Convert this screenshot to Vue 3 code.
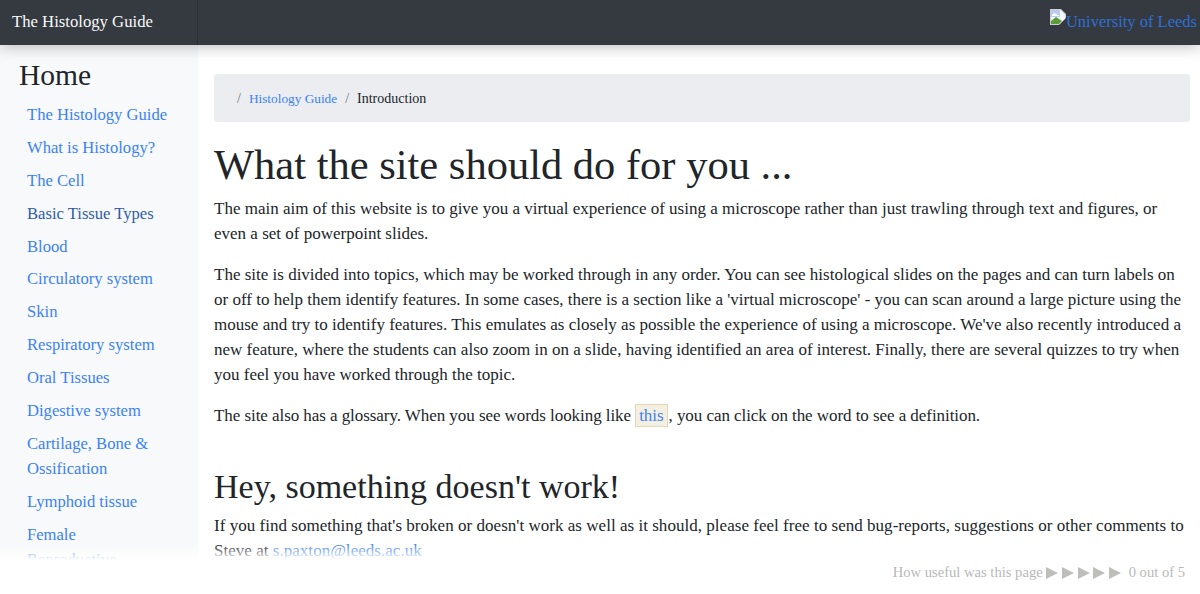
<script setup>
const navItems = [
  'The Histology Guide', 'What is Histology?', 'The Cell', 'Basic Tissue Types', 'Blood',
  'Circulatory system', 'Skin', 'Respiratory system', 'Oral Tissues', 'Digestive system',
  'Cartilage, Bone & Ossification', 'Lymphoid tissue', 'Female Reproductive'
]
const stars = [1, 2, 3, 4, 5]
</script>

<template>
  <div class="page">
    <header class="topbar">
      <a class="brand" href="#">The Histology Guide</a>
      <a class="leeds" href="#">
        <svg class="broken" width="16" height="16" viewBox="0 0 16 16">
          <path d="M0 0h11l5 5v11H0z" fill="#c9ccd0" />
          <path d="M1 1h9.5L15 5.500V15H1z" fill="#f4f6f8" />
          <path d="M1 1h9v7H1z" fill="#b9cdee" />
          <path d="M2 6c1-2 3-2 4-1s2 1 3 1v1H2z" fill="#fff" />
          <path d="M1 15V12l5-4 3 2 3 2-3 3z" fill="#5d9a3c" />
          <path d="M9 16 16 9v7z" fill="#343a40" />
        </svg>University of Leeds
      </a>
    </header>

    <div class="body">
      <aside class="sidebar">
        <h4 class="side-title">Home</h4>
        <ul class="side-nav">
          <li v-for="item in navItems" :key="item">
            <a href="#" :class="{ dark: item === 'Basic Tissue Types' }">{{ item }}</a>
          </li>
        </ul>
      </aside>

      <main class="content">
        <nav class="crumbs">
          <span class="sep">/</span>
          <a href="#">Histology Guide</a>
          <span class="sep">/</span>
          <span>Introduction</span>
        </nav>

        <h1>What the site should do for you ...</h1>
        <p>The main aim of this website is to give you a virtual experience of using a microscope rather than just trawling through text and figures, or even a set of powerpoint slides.</p>
        <p>The site is divided into topics, which may be worked through in any order. You can see histological slides on the pages and can turn labels on or off to help them identify features. In some cases, there is a section like a 'virtual microscope' - you can scan around a large picture using the mouse and try to identify features. This emulates as closely as possible the experience of using a microscope. We've also recently introduced a new feature, where the students can also zoom in on a slide, having identified an area of interest. Finally, there are several quizzes to try when you feel you have worked through the topic.</p>
        <p class="glossary">The site also has a glossary. When you see words looking like <a class="gloss" href="#">this</a>, you can click on the word to see a definition.</p>

        <h2>Hey, something doesn't work!</h2>
        <p class="report">If you find something that's broken or doesn't work as well as it should, please feel free to send bug-reports, suggestions or other comments to Steve at <a href="#">s.paxton@leeds.ac.uk</a></p>
      </main>
    </div>

    <div class="fade"></div>
    <div class="rating">
      <span>How useful was this page</span>
      <span class="stars"><i v-for="s in stars" :key="s"></i></span>
      <span class="score">0 out of 5</span>
    </div>
  </div>
</template>

<style scoped>
.page {
  position: relative;
  height: 594px;
  overflow: hidden;
  background: #fff;
  color: #212529;
  font-family: "Liberation Serif", "Times New Roman", serif;
  font-size: 17px;
  line-height: 25px;
}
a { color: #3b82f6; text-decoration: none; }

.topbar {
  position: relative;
  z-index: 2;
  height: 45px;
  display: flex;
  justify-content: space-between;
  background: #343a40;
  box-shadow: 0 2px 14px rgba(0, 0, 0, 0.25);
}
.brand {
  width: 198px;
  box-sizing: border-box;
  padding-left: 12px;
  border-right: 1px solid #2b3035;
  color: #f8f9fa;
  font-size: 16.7px;
  line-height: 43px;
}
.leeds {
  color: #2f6fd6;
  padding: 8px 3px 0 0;
  display: flex;
  font-size: 16.5px;
  line-height: 27px;
  height: 27px;
}
.broken { margin-top: 1px; }

.body { display: flex; height: 549px; }
.sidebar {
  width: 198px;
  flex-shrink: 0;
  box-sizing: border-box;
  padding: 12px 0 0 19px;
  background: #f8f9fa;
}
.side-title {
  margin: 0 0 9px;
  font-size: 29.5px;
  font-weight: 400;
  line-height: 36px;
}
.side-nav {
  list-style: none;
  margin: 0;
  padding: 0 0 0 8px;
  width: 142px;
  font-size: 16.6px;
}
.side-nav li { margin-bottom: 7.9px; }
.side-nav .dark { color: #2f5da8; }

.content { flex: 1; padding: 29px 10px 0 16px; min-width: 0; }
.crumbs {
  display: flex;
  align-items: center;
  gap: 8px;
  height: 48px;
  padding-left: 23px;
  margin-bottom: 19px;
  border-radius: 4px;
  background: #ebedf0;
  font-size: 14px;
}
.crumbs a { font-size: 13.3px; }
.sep { color: #6c757d; }
h1 {
  margin: 0 0 7px;
  font-size: 42.5px;
  font-weight: 400;
  line-height: 48px;
}
h2 {
  margin: 39px 0 6px;
  font-size: 34px;
  font-weight: 400;
  line-height: 40px;
}
p { margin: 0 0 16px; }
.glossary { letter-spacing: -0.06px; }
.report { letter-spacing: 0.03px; }
.gloss {
  margin: 0 1px 0 0;
  padding: 1px 3px;
  background: #f4efe0;
  border: 1px solid #e2d8b8;
}

.fade {
  position: absolute;
  left: 0;
  right: 0;
  top: 544px;
  bottom: 0;
  background: linear-gradient(to bottom, rgba(255, 255, 255, 0), #fff 16px);
}
.rating {
  position: absolute;
  right: 15px;
  top: 560px;
  display: flex;
  align-items: center;
  color: #b8b8b8;
  font-size: 14.6px;
}
.stars { display: flex; gap: 3.8px; margin: 0 7.500px 0 3.300px; }
.stars i {
  width: 0;
  height: 0;
  border-left: 12px solid #bdbdb9;
  border-top: 6.500px solid transparent;
  border-bottom: 6.500px solid transparent;
}
</style>
